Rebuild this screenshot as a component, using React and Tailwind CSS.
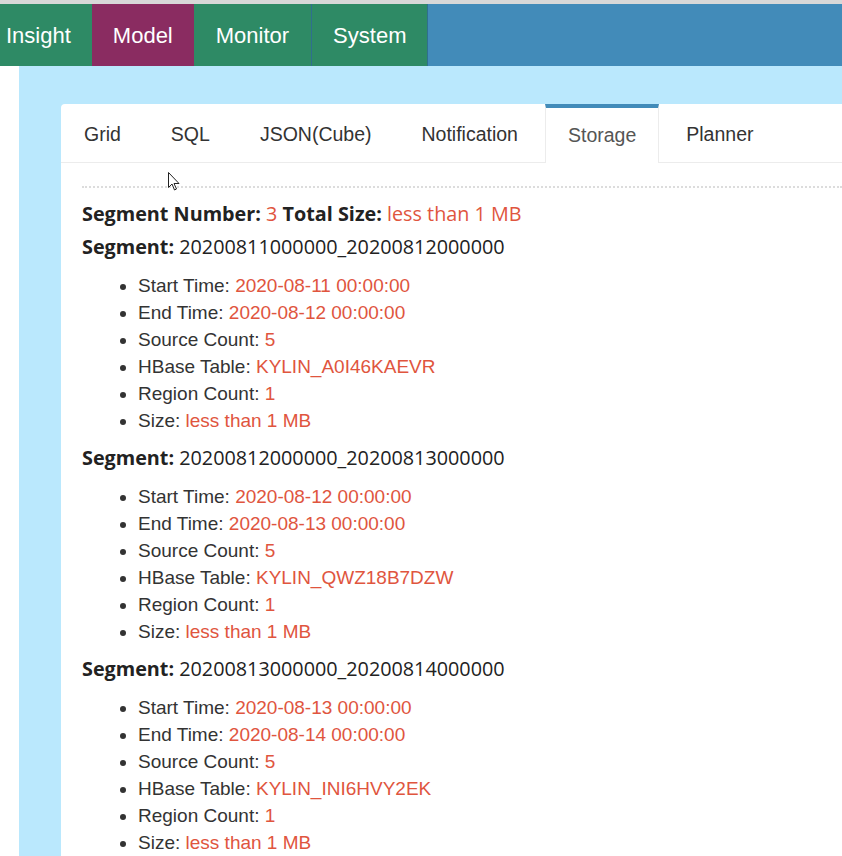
import React from 'react';

const navItems = [
    { label: 'Insight', bg: 'bg-[#2e8a65]', pad: 'pl-[6px] pr-[21px]' },
    { label: 'Model', bg: 'bg-[#8a2c61]', pad: 'px-[21px]' },
    { label: 'Monitor', bg: 'bg-[#2e8a65]', pad: 'px-[22px]' },
    { label: 'System', bg: 'bg-[#2e8a65] border-l border-[#2f6f8f]', pad: 'px-[21px]' }
];

const tabs = ['Grid', 'SQL', 'JSON(Cube)', 'Notification', 'Storage', 'Planner'];

const segments = [
    {
        name: '20200811000000_20200812000000',
        start: '2020-08-11 00:00:00',
        end: '2020-08-12 00:00:00',
        table: 'KYLIN_A0I46KAEVR'
    },
    {
        name: '20200812000000_20200813000000',
        start: '2020-08-12 00:00:00',
        end: '2020-08-13 00:00:00',
        table: 'KYLIN_QWZ18B7DZW'
    },
    {
        name: '20200813000000_20200814000000',
        start: '2020-08-13 00:00:00',
        end: '2020-08-14 00:00:00',
        table: 'KYLIN_INI6HVY2EK'
    }
];

const Segment = ({ seg }) => {
    const rows = [
        ['Start Time', seg.start],
        ['End Time', seg.end],
        ['Source Count', '5'],
        ['HBase Table', seg.table],
        ['Region Count', '1'],
        ['Size', 'less than 1 MB']
    ];
    return (
        <div>
            <p className="mb-[12px] font-['Open_Sans',sans-serif] text-[19.8px] leading-[27px] text-[#222]">
                <b>Segment:</b> {seg.name}
            </p>
            <ul className="mb-[10px] list-disc pl-[56px] font-['Liberation_Sans',Arial,sans-serif] text-[19px] leading-[27px] text-[#333]">
                {rows.map((r) => (
                    <li key={r[0]}>
                        {r[0]}: <span className="text-[#e0553e]">{r[1]}</span>
                    </li>
                ))}
            </ul>
        </div>
    );
};

export default function App() {
    return (
        <div className="relative min-h-screen overflow-hidden bg-white">
            <div className="h-[4px] bg-[#d8d8d8]" />
            <div className="flex h-[62px] bg-[#428bb9] font-['Liberation_Sans',Arial,sans-serif] text-[22px] text-white">
                {navItems.map((n) => (
                    <div key={n.label} className={`flex items-center ${n.bg} ${n.pad}`}>
                        {n.label}
                    </div>
                ))}
                <div className="w-px bg-[#2f6f8f]" />
            </div>

            <div className="flex">
                <div className="w-[19px] shrink-0 bg-white" />
                <div className="min-h-[790px] flex-1 bg-[#bae8fd] pl-[42px] pt-[38px]">
                    <div className="min-h-[760px] rounded-tl-[4px] bg-white">
                        <div className="flex h-[59px] border-b border-[#ececec] font-['Liberation_Sans',Arial,sans-serif] text-[19.5px]">
                            {tabs.map((t) => (
                                t === 'Storage' ? (
                                    <div key={t} className="-mb-px mr-[4px] flex items-center border-x border-t-[4px] border-x-[#ececec] border-t-[#428bb9] bg-white px-[22px] text-[#555]">
                                        {t}
                                    </div>
                                ) : (
                                    <div key={t} className="mr-[4px] flex items-center px-[23px] pt-[4px] text-[#333]">
                                        {t}
                                    </div>
                                )
                            ))}
                        </div>

                        <div className="pl-[21px] pt-[23px]">
                            <div className="border-t-2 border-dotted border-[#dcdcdc]" />
                            <p className="mb-[6px] mt-[12px] font-['Open_Sans',sans-serif] text-[19.8px] leading-[27px] text-[#222]">
                                <b>Segment Number:</b> <span className="text-[#e0553e]">3</span>{' '}
                                <b>Total Size:</b> <span className="text-[#e0553e]">less than 1 MB</span>
                            </p>
                            {segments.map((s) => (
                                <Segment key={s.name} seg={s} />
                            ))}
                        </div>
                    </div>
                </div>
            </div>

            <svg className="absolute left-[168px] top-[172px]" width="12" height="19" viewBox="0 0 12 19">
                <path d="M0.5 0.5 L0.5 15.5 L4 12 L6.5 18 L8.5 17 L6 11.5 L11 11.5 Z" fill="white" stroke="#222" strokeWidth="1" strokeLinejoin="round" />
            </svg>
        </div>
    );
}
